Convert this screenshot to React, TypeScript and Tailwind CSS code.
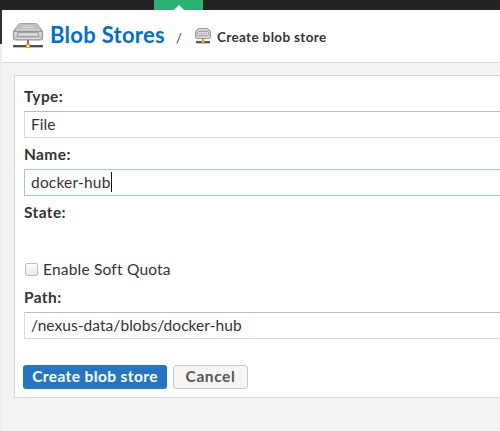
import React from "react";

function DriveIcon({ className }: { className: string }) {
  return (
    <svg viewBox="0 0 32 28" className={className} aria-hidden="true">
      <defs>
        <linearGradient id="driveFace" x1="0" y1="0" x2="0" y2="1">
          <stop offset="0" stopColor="#dedede" />
          <stop offset="1" stopColor="#b4b4b4" />
        </linearGradient>
      </defs>
      <path d="M7.5 1.5h17l6 7.5h-29z" fill="#c4c4c4" stroke="#a0a0a0" />
      <path d="M9 2.5h14M7 4.5h18M5 6.5h22" stroke="#bababa" />
      <path d="M11 3.5h10M9 5.5h14M4 8h24" stroke="#dadada" />
      <path d="M1.5 9.5h29v7.5l-1 1h-27l-1-1z" fill="url(#driveFace)" stroke="#929292" />
      <path d="M5.5 10.5h21v4h-21z" fill="#cfcfcf" stroke="#a0a0a0" />
      <path d="M7 12.5h18" stroke="#e2e2e2" />
      <path d="M3 16.5h26" stroke="#dadada" />
      <path d="M16 18v6" stroke="#777" strokeWidth="2" />
      <path d="M1 24h30" stroke="#505050" strokeWidth="2" />
      <path d="M1 25.5h30" stroke="#c5c5c5" />
      <path d="M14.5 22.5h3v3h-3z" fill="#fff0a0" stroke="#ee9d00" />
    </svg>
  );
}

function SmallDriveIcon() {
  return (
    <svg viewBox="0 0 16 16" className="h-4 w-4" aria-hidden="true">
      <path d="M3.5.5h9l3 3v6l-1 1h-13l-1-1v-6z" fill="#c9c9c9" stroke="#979797" />
      <path d="M4 1.5h8M2 9.5h12" stroke="#dedede" />
      <path d="M3.5 3.5h9l1 1v2l-1 1h-9l-1-1v-2z" fill="#dcdcdc" stroke="#a4a4a4" />
      <path d="M4 5.5h8" stroke="#b8b8b8" />
      <path d="M8 11v2" stroke="#999" strokeWidth="2" />
      <path d="M1 14h14" stroke="#585858" strokeWidth="2" />
      <path d="M1 15.5h14" stroke="#c5c5c5" />
      <path d="M7 12.5h2v2h-2z" fill="#ffe17a" stroke="#e3a400" />
    </svg>
  );
}

function Field({ label, value, focused }: { label: string; value: string; focused?: boolean }) {
  return (
    <div className="h-[58px]">
      <div className="h-5 text-[15.5px] font-bold leading-[18px] tracking-[0.38px]">{label}</div>
      <div className={"mt-1 flex h-[27px] items-center border border-r-0 px-1.5 pb-px text-[15.5px] leading-5 " + (focused ? "border-[#95c7e8]" : "border-[#d9d9d9] border-t-[#bdbdbd]")}>
        <span className={focused ? "tracking-[0.2px]" : "tracking-[0.06px]"}>{value}</span>
        {focused && <span className="h-5 w-px bg-[#111]" />}
      </div>
    </div>
  );
}

export default function App() {
  return (
    <div className="h-[431px] w-[500px] overflow-hidden bg-[#f3f3f3] font-['Lato',sans-serif] text-[#333]">
      <div className="flex h-[10px] bg-[#222] pl-[154px]">
        <div className="flex w-[49px] items-end justify-center bg-[#29b473]">
          <svg viewBox="0 0 10 5" className="h-[5px] w-[10px]"><path d="M0 5l5-5 5 5z" fill="white" /></svg>
        </div>
      </div>
      <div className="flex h-[421px]">
        <div className="w-[2px] bg-[#eee]"><div className="h-[34px] bg-[#303030]" /></div>
        <main className="w-[498px]">
          <header className="flex h-[53px] items-center border-b border-[#d9d9d9] bg-white pl-[10px]">
            <DriveIcon className="h-7 w-8" />
            <h1 className="-mt-[3px] ml-[6px] w-[126px] whitespace-nowrap text-[22px] font-bold leading-7 tracking-[0.28px] text-[#0070c9]">Blob Stores</h1>
            <span className="mt-[3px] w-[19px] text-[13px] leading-5">/</span>
            <SmallDriveIcon />
            <span className="ml-[6px] mt-[2px] whitespace-nowrap text-[13.5px] font-bold leading-5 tracking-[0.35px]">Create blob store</span>
          </header>
          <section className="ml-3 mt-3 h-[323px] border border-r-0 border-[#d9d9d9] bg-white pl-[9px] pt-[11px]">
            <Field label="Type:" value="File" />
            <Field label="Name:" value="docker-hub" focused />
            <div className="h-[57px] text-[15.5px] font-bold leading-[18px] tracking-[0.38px]">State:</div>
            <label className="flex h-[28px] items-start text-[15.5px] leading-[18px]">
              <span className="ml-px mt-[3px] h-[13px] w-[13px] rounded-[2px] border border-[#bcbcbc] bg-gradient-to-b from-white to-[#e8e8e8]" />
              <span className="ml-[5px] tracking-[0.2px]">Enable Soft Quota</span>
            </label>
            <Field label="Path:" value="/nexus-data/blobs/docker-hub" />
            <div className="-ml-px mt-[19px] flex gap-[6px]">
              <button className="h-6 w-[144px] whitespace-nowrap rounded-[3px] bg-[#2476c3] pb-px text-[15.5px] font-bold leading-[23px] tracking-[0.4px] text-white">Create blob store</button>
              <button className="h-6 w-[75px] rounded-[3px] border border-[#c8c8c8] bg-[#f5f5f5] pb-px text-[15.5px] font-bold leading-[21px] tracking-[0.6px] text-[#555]">Cancel</button>
            </div>
          </section>
        </main>
      </div>
    </div>
  );
}
